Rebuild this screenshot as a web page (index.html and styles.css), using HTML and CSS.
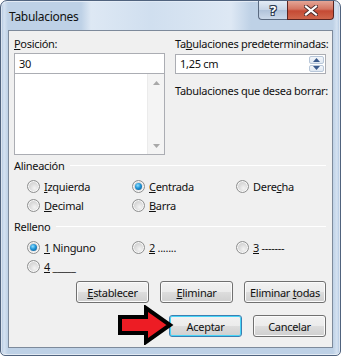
FILE: index.html
```html
<!DOCTYPE html>
<html lang="es">
<head>
    <meta charset="UTF-8">
    <title>Tabulaciones</title>
    <link rel="stylesheet" href="styles.css">
</head>
<body>
    <div class="window">
        <div class="titlebar">
            <span class="title">Tabulaciones</span>
            <div class="caption-btns">
                <div class="cap-btn cap-help">?</div>
                <div class="cap-btn cap-close">
                    <svg width="14" height="11" viewBox="0 0 14 11">
                        <path d="M2 1.5 L12 9.5 M12 1.5 L2 9.5" stroke="#4a2a2a" stroke-width="4" stroke-linecap="square"/>
                        <path d="M2 1.5 L12 9.5 M12 1.5 L2 9.5" stroke="#fff" stroke-width="2.2" stroke-linecap="square"/>
                    </svg>
                </div>
            </div>
        </div>
        <div class="client">
            <div class="top">
                <div class="col">
                    <div class="lbl"><u>P</u>osición:</div>
                    <div class="field">30</div>
                    <div class="listbox">
                        <div class="vscroll">
                            <svg width="7" height="4" viewBox="0 0 7 4"><path d="M0 4 L3.5 0 L7 4 Z" fill="#a8a8a8"/></svg>
                            <svg width="7" height="4" viewBox="0 0 7 4"><path d="M0 0 L3.5 4 L7 0 Z" fill="#a8a8a8"/></svg>
                        </div>
                    </div>
                </div>
                <div class="col">
                    <div class="lbl">Ta<u>b</u>ulaciones predeterminadas:</div>
                    <div class="field spin">
                        <span>1,25 cm</span>
                        <div class="spin-btns">
                            <div class="spin-btn"><svg width="7" height="4" viewBox="0 0 7 4"><path d="M0 4 L3.5 0 L7 4 Z" fill="#3a5a8c"/></svg></div>
                            <div class="spin-btn"><svg width="7" height="4" viewBox="0 0 7 4"><path d="M0 0 L3.5 4 L7 0 Z" fill="#3a5a8c"/></svg></div>
                        </div>
                    </div>
                    <div class="lbl del-lbl">Tabulaciones que desea borrar:</div>
                </div>
            </div>

            <div class="group">
                <div class="group-head"><span>Alineación</span><span class="rule"></span></div>
                <div class="radio-grid">
                    <div class="radio"><span class="dot"></span><span><u>I</u>zquierda</span></div>
                    <div class="radio"><span class="dot on"></span><span><u>C</u>entrada</span></div>
                    <div class="radio"><span class="dot"></span><span>Dere<u>c</u>ha</span></div>
                    <div class="radio"><span class="dot"></span><span><u>D</u>ecimal</span></div>
                    <div class="radio"><span class="dot"></span><span><u>B</u>arra</span></div>
                </div>
            </div>

            <div class="group fill">
                <div class="group-head"><span>Relleno</span><span class="rule"></span></div>
                <div class="radio-grid">
                    <div class="radio"><span class="dot on"></span><span><u>1</u> Ninguno</span></div>
                    <div class="radio"><span class="dot"></span><span><u>2</u> .......</span></div>
                    <div class="radio"><span class="dot"></span><span><u>3</u> -------</span></div>
                    <div class="radio"><span class="dot"></span><span><u>4</u> _____</span></div>
                </div>
            </div>

            <div class="btn-row">
                <div class="btn"><span><u>E</u>stablecer</span></div>
                <div class="btn"><span><u>E</u>liminar</span></div>
                <div class="btn wide"><span>Eliminar <u>t</u>odas</span></div>
            </div>
            <div class="btn-row last">
                <div class="btn default"><span>Aceptar</span></div>
                <div class="btn"><span>Cancelar</span></div>
                <svg class="arrow" width="58" height="40" viewBox="0 0 58 40">
                    <path d="M3 12 H29 V3 L53 20 L29 37 V28 H3 Z" fill="#ed1c24" stroke="#000" stroke-width="4" stroke-linejoin="miter"/>
                </svg>
            </div>
        </div>
    </div>
</body>
</html>
```

FILE: styles.css
```css
* { box-sizing: border-box; }
body { margin: 0; background: #fff; font-family: "Noto Sans", "Open Sans", sans-serif; font-size: 11px; letter-spacing: -0.3px; color: #111; }
u { text-decoration: underline; text-underline-offset: 1px; }

.window {
    width: 341px; height: 356px;
    border: 1px solid #50637e;
    border-radius: 7px 7px 5px 5px;
    background: linear-gradient(90deg, #a9c0db 0px, #d5e2f1 3px, #bed1e6 7px, #bed1e6 calc(100% - 7px), #d5e2f1 calc(100% - 3px), #a9c0db 100%);
    box-shadow: inset 0 0 0 1px rgba(255,255,255,0.55);
    display: flex; flex-direction: column;
}
.titlebar {
    height: 29px;
    display: flex; justify-content: space-between; align-items: flex-start;
    padding-left: 8px;
    background: linear-gradient(90deg, transparent 0, transparent 80px, rgba(235,242,250,0.7) 90px, rgba(220,232,245,0.6) 150px, rgba(235,242,250,0.7) 230px, transparent 250px);
}
.title { margin-top: 7px; font-size: 12px; color: #111; }
.caption-btns { display: flex; margin-right: 6px; }
.cap-btn { height: 19px; display: flex; align-items: center; justify-content: center; }
.cap-help {
    width: 29px;
    border: 1px solid #5a6a80; border-top: none; border-right: none;
    border-radius: 0 0 0 4px;
    background: linear-gradient(#e3ebf5, #c6d4e6 50%, #b0c3da 51%, #cbd9ea);
    color: #fff; font-size: 13px; font-weight: bold;
    text-shadow: 0 0 1px #2d3b50, 1px 1px 0 #2d3b50, -1px -1px 0 #2d3b50, 1px -1px 0 #2d3b50, -1px 1px 0 #2d3b50;
}
.cap-close {
    width: 47px;
    border: 1px solid #5b2420; border-top: none;
    border-radius: 0 0 4px 0;
    background: linear-gradient(#e4a596, #d47562 45%, #c54a34 55%, #d0664c);
}

.client {
    margin: 0 7px 7px 7px;
    flex: 1;
    background: #f0f0f0;
    border: 1px solid #7d8a9b;
    padding: 5px 6px 0 5px;
}
.top { display: grid; grid-template-columns: 151px 151px; column-gap: 10px; }
.lbl { height: 16px; line-height: 16px; white-space: nowrap; }
.field {
    height: 21px; margin-top: 1px;
    background: #fff; border: 1px solid #abadb3;
    padding: 0 4px; line-height: 19px;
}
.listbox {
    height: 82px; margin-top: -1px;
    background: #fff; border: 1px solid #abadb3;
    display: flex; justify-content: flex-end;
}
.vscroll {
    width: 17px; background: #f4f4f4; border-left: 1px solid #ebebeb;
    display: flex; flex-direction: column; justify-content: space-between; align-items: center;
    padding: 7px 0 6px;
}
.spin { display: flex; justify-content: space-between; align-items: center; padding-right: 1px; margin-top: 2px; height: 20px; }
.spin span { line-height: 18px; }
.spin-btns { display: flex; flex-direction: column; width: 15px; height: 16px; gap: 1px; }
.spin-btn {
    flex: 1; display: flex; align-items: center; justify-content: center;
    border: 1px solid #b8c7d9; border-radius: 2px;
    background: linear-gradient(#f3f6fa, #dfe8f2);
}
.del-lbl { margin-top: 9px; }

.group { margin-top: 3px; }
.group-head { display: flex; align-items: center; height: 15px; line-height: 15px; }
.group-head .rule { flex: 1; height: 1px; margin: 0 0 0 6px; background: #d5dfe5; border-bottom: 1px solid #fff; }
.radio-grid {
    display: grid; grid-template-columns: 105px 104px auto;
    row-gap: 6px;
    padding: 7px 0 0 13px;
}
.radio { display: flex; align-items: center; height: 13px; line-height: 13px; white-space: nowrap; }
.dot {
    width: 13px; height: 13px; border-radius: 50%; margin-right: 4px; flex: none;
    border: 1px solid #8e8f8f;
    background: radial-gradient(circle at 60% 65%, #f4f4f4 0, #dcdcdc 45%, #c6c6c6 100%);
    box-shadow: inset 0 0 0 1px #f8f8f8;
    display: flex; align-items: center; justify-content: center;
}
.dot.on::after {
    content: ""; width: 7px; height: 7px; border-radius: 50%;
    background: radial-gradient(circle at 40% 35%, #8fe0ff 0, #1f93d6 45%, #0a4f85 100%);
}
.fill { margin-top: 7px; }

.btn-row { display: flex; justify-content: flex-end; gap: 11px; margin-top: 8px; }
.btn-row.last { margin-top: 12px; position: relative; }
.btn {
    width: 73px; height: 22px;
    display: flex; align-items: center; justify-content: center;
    border: 1px solid #707070; border-radius: 3px;
    background: linear-gradient(#f2f2f2, #ebebeb 50%, #dddddd 51%, #cfcfcf);
    box-shadow: inset 0 0 0 1px #fbfbfb;
    white-space: nowrap;
}
.btn.wide { width: 82px; }
.btn.default {
    border-color: #3c7fb1;
    box-shadow: inset 0 0 0 1px #48d5f8;
}
.arrow { position: absolute; left: 103px; top: -10px; }
```
